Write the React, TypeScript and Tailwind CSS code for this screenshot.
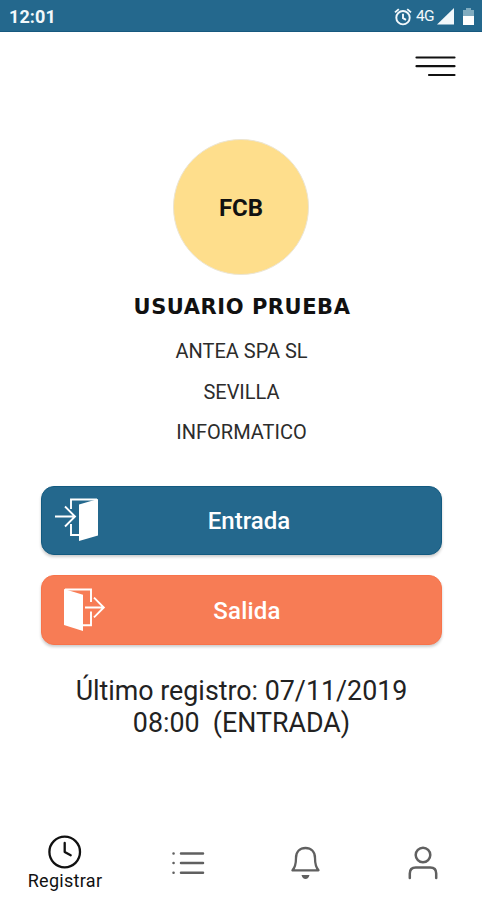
import React from "react";

function StatusBar() {
  return (
    <header className="flex h-8 items-center justify-between border-b border-[#17597f] bg-[#24688d] pl-[9px] pr-2 text-[#f2f8fb]">
      <span className="pt-[3px] text-[18px] font-bold leading-none tracking-[0.1px]">12:01</span>
      <div className="flex items-center pt-[2px]">
        <svg width="18" height="18" viewBox="0 0 18 18" fill="none" stroke="currentColor" strokeWidth="1.9">
          <circle cx="9" cy="9.7" r="6.7" />
          <path d="M1 4.4 4.8 1.1M17 4.4 13.2 1.1M9 5.8v4.3l3 1.8" />
        </svg>
        <span className="ml-[4px] w-[19px] text-[15.5px] leading-none tracking-[-0.8px]">4G</span>
        <svg className="ml-[2px]" width="17" height="17" viewBox="0 0 17 17" fill="currentColor">
          <path d="M17 0v16.5H0z" />
        </svg>
        <svg className="ml-[9px]" width="11" height="17" viewBox="0 0 11 17">
          <path d="M3 0h5v2h3v7H0V2h3z" fill="#80acc0" />
          <path d="M0 8h11v9H0z" fill="#fff" />
        </svg>
      </div>
    </header>
  );
}

function EnterIcon() {
  return (
    <svg width="46" height="44" viewBox="0 0 46 44" fill="none" stroke="#fff" strokeWidth="1.9">
      <path d="M17 11V1.5h26M17 26v11h9" />
      <path d="M1 18.5h19M11 8.5l10 10-10 10" />
      <path d="M25 6.5 44 1v36.5L25 43z" fill="#fff" stroke="none" />
    </svg>
  );
}

function ExitIcon() {
  return (
    <svg width="44" height="44" viewBox="0 0 44 44" fill="none" stroke="#fff" strokeWidth="1.9">
      <path d="M2 1.5h26V14M28 23.5v13.7h-9" />
      <path d="M22 19.5h18M31 9.7l9.8 9.8L31 29.3" />
      <path d="M1 1 20 6.8V43L1 37z" fill="#fff" stroke="none" />
    </svg>
  );
}

export default function App() {
  return (
    <div className="flex h-[900px] w-[482px] flex-col bg-white font-['Roboto','Liberation_Sans',sans-serif] text-[#111]">
      <StatusBar />
      <div className="flex h-[107px] justify-end pr-[26px] pt-[23px]">
        <svg width="41" height="22" viewBox="0 0 41 22" stroke="#111" strokeWidth="2.2" strokeLinecap="round">
          <path d="M1.5 2.5h38M1.5 11.2h38M14 20h25.5" />
        </svg>
      </div>

      <main className="flex flex-col items-center">
        <div className="flex size-[136px] items-center justify-center rounded-full border border-[#ece5d2] bg-[#fede8c] text-[24px] font-bold leading-none">
          <span className="pt-[1px]">FCB</span>
        </div>
        <h1 className="mt-5 h-6 whitespace-nowrap pl-[2px] font-['DejaVu_Sans',sans-serif] text-[21px] font-bold leading-6 tracking-[0.55px]">USUARIO PRUEBA</h1>
        <div className="mt-3 flex flex-col items-center pl-px text-[20px] leading-[40.5px] text-[#2c2c2c]">
          <p>ANTEA SPA SL</p>
          <p>SEVILLA</p>
          <p>INFORMATICO</p>
        </div>
        <div className="mt-[33px] flex w-[401px] flex-col gap-5 text-[24px] font-medium text-white">
          <button className="grid h-[69px] grid-cols-[110px_1fr_94px] items-center rounded-[13px] border border-[#125a80] bg-[#24688d] shadow-[0_2px_3px_rgba(0,0,0,0.2)]">
            <span className="pl-[12px]"><EnterIcon /></span>
            <span className="pt-[2px] text-center">Entrada</span>
          </button>
          <button className="grid h-[70px] grid-cols-[106px_1fr_94px] items-center rounded-[13px] border border-[#f8734a] bg-[#f77c55] shadow-[0_2px_3px_rgba(0,0,0,0.2)]">
            <span className="pl-[21px]"><ExitIcon /></span>
            <span className="pt-[2px] text-center tracking-[0.2px]">Salida</span>
          </button>
        </div>
        <p className="mt-[30px] whitespace-pre pl-px text-center text-[26.8px] leading-8 text-[#222]">{"Último registro: 07/11/2019\n08:00  (ENTRADA)"}</p>
      </main>

      <nav className="mt-auto flex h-[70px] items-start text-[#606060]">
        <div className="ml-[20px] flex w-[90px] flex-col items-center pt-[5px] text-[#111]">
          <svg width="34" height="34" viewBox="0 0 34 34" fill="none" stroke="currentColor" strokeWidth="2.3" strokeLinecap="round" strokeLinejoin="round">
            <circle cx="16.7" cy="17" r="15.3" />
            <path d="M16.700 8v9l6 3.3" />
          </svg>
          <span className="mt-[2px] text-[18px] leading-5 tracking-[0.3px]">Registrar</span>
        </div>
        <svg className="ml-[61px] mt-[20px]" width="34" height="26" viewBox="0 0 34 26" stroke="currentColor" strokeWidth="2.5" strokeLinecap="round">
          <path d="M10 3.5h22M10 13h22M10 22.7h22M2.5 3.5h.1M2.5 13h.1M2.5 22.7h.1" />
        </svg>
        <svg className="ml-[86px] mt-[16px]" width="30" height="34" viewBox="0 0 30 34" fill="none" stroke="currentColor" strokeWidth="2.3" strokeLinejoin="round" strokeLinecap="round">
          <path d="M1.5 24.3H27.5C25 21.5 24 17 24 12 24 5.5 20 2 14.5 2S5 5.5 5 12c0 5-1 9.500-3.500 12.300z" />
          <path d="M10.500 29h8q-1 4-4 4t-4-4z" fill="currentColor" stroke="none" />
        </svg>
        <svg className="ml-[86px] mt-[16px]" width="32" height="34" viewBox="0 0 32 34" fill="none" stroke="currentColor" strokeWidth="2.5" strokeLinecap="round">
          <circle cx="16" cy="9" r="7.3" />
          <path d="M2.8 32v-4.5c0-4 2.500-6 6-6h14.400c3.500 0 6 2 6 6V32" />
        </svg>
      </nav>
    </div>
  );
}
